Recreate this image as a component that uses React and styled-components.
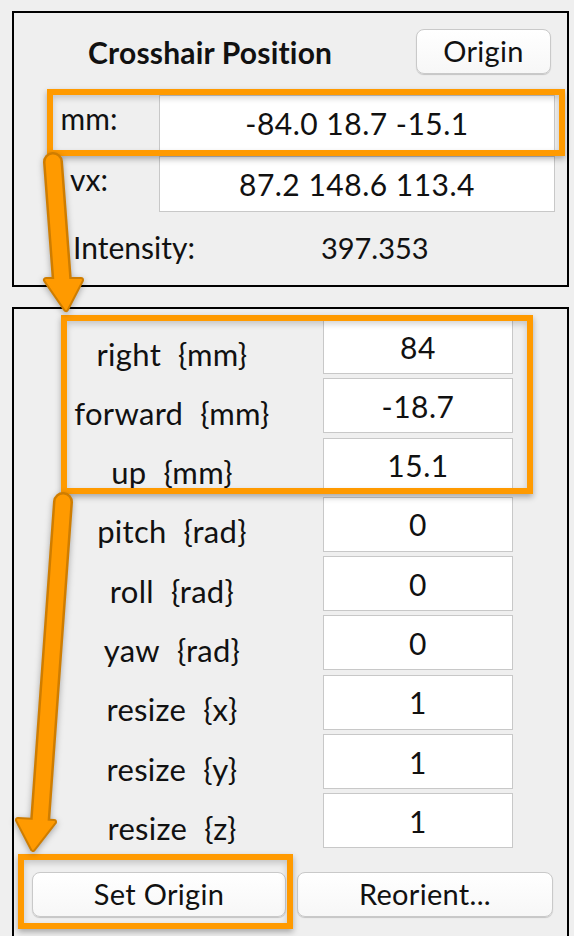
import React from 'react'
import styled, { createGlobalStyle } from 'styled-components'

const GlobalStyle = createGlobalStyle`
  html, body {
    margin: 0;
    padding: 0;
    background: #efefef;
    overflow: hidden;
  }
  body {
    font-family: Lato, "Open Sans", "Liberation Sans", sans-serif;
    color: #111;
  }
`;

const Page = styled.div`
  position: relative;
  width: 574px;
  height: 936px;
  padding: 11px 5px 0 12px;
  box-sizing: border-box;
  display: flex;
  flex-direction: column;
  gap: 20px;
`;

const Panel = styled.div`
  border: 2px solid #000;
  box-sizing: border-box;
  background: #efefef;
  height: ${p => p.$height}px;
  flex-shrink: 0;
`;

const Header = styled.div`
  display: flex;
  align-items: center;
  height: 45px;
  padding: 16px 16px 0 74px;
`;

const Title = styled.span`
  font-size: 30px;
  font-weight: 700;
  letter-spacing: 0.2px;
`;

const Button = styled.button`
  font-family: inherit;
  font-size: 29px;
  letter-spacing: 0.3px;
  color: #111;
  height: 45px;
  width: ${p => p.$width}px;
  margin-left: ${p => (p.$push ? 'auto' : '0')};
  background: linear-gradient(#ffffff, #f7f7f7);
  border: 1px solid #c9c9c9;
  border-radius: 8px;
  box-shadow: 0 1px 1px rgba(0, 0, 0, 0.18);
  padding: 0 0 2px;
`;

const CoordGrid = styled.div`
  display: grid;
  grid-template-columns: 145px 1fr;
  grid-auto-rows: 56px;
  row-gap: 5px;
  padding: 21px 12px 0 0;
`;

const CoordLabel = styled.div`
  font-size: 30px;
  text-align: center;
  padding: 5px 0 0 5px;
`;

const Field = styled.div`
  background: #fff;
  border: 1px solid #c8c8c8;
  display: flex;
  align-items: center;
  justify-content: center;
  font-size: 30px;
  letter-spacing: 0.5px;
`;

const IntensityRow = styled.div`
  display: flex;
  align-items: baseline;
  padding: 17px 0 0 59px;
  font-size: 30px;
`;

const IntensityValue = styled.span`
  margin-left: 126px;
  font-size: 29px;
`;

const ParamGrid = styled.div`
  display: grid;
  grid-template-columns: 309px 190px;
  grid-auto-rows: 55px;
  row-gap: 4.3px;
  padding-top: 10px;
`;

const ParamLabel = styled.div`
  display: flex;
  justify-content: center;
  align-items: center;
  gap: 17px;
  font-size: 31px;
  letter-spacing: 0.3px;
  padding: 14px 0 0 7px;
`;

const ButtonRow = styled.div`
  display: flex;
  gap: 11px;
  padding: 24px 14px 0 18px;
`;

const Overlay = styled.div`
  position: absolute;
  left: ${p => p.$x}px;
  top: ${p => p.$y}px;
  width: ${p => p.$w}px;
  height: ${p => p.$h}px;
  box-sizing: border-box;
  border: 6px solid #ff9a00;
  box-shadow: 0 3px 6px rgba(0, 0, 0, 0.3), inset 0 3px 6px rgba(0, 0, 0, 0.18);
  pointer-events: none;
`;

const Arrows = styled.svg`
  position: absolute;
  left: 0;
  top: 0;
  pointer-events: none;
  filter: drop-shadow(0 2px 3px rgba(0, 0, 0, 0.3));
`;

const params = [
  ['right', 'mm', '84'],
  ['forward', 'mm', '-18.7'],
  ['up', 'mm', '15.1'],
  ['pitch', 'rad', '0'],
  ['roll', 'rad', '0'],
  ['yaw', 'rad', '0'],
  ['resize', 'x', '1'],
  ['resize', 'y', '1'],
  ['resize', 'z', '1'],
]

function Arrow({ shaft, head }) {
  return (
    <g strokeLinejoin="round" strokeLinecap="round">
      <path d={shaft} stroke="#cf7d00" strokeWidth="20" fill="none" />
      <path d={head} stroke="#cf7d00" strokeWidth="6" fill="#cf7d00" />
      <path d={shaft} stroke="#ff9a00" strokeWidth="15" fill="none" />
      <path d={head} stroke="#ff9a00" strokeWidth="2" fill="#ff9a00" />
    </g>
  )
}

export default function App() {
  return (
    <>
      <GlobalStyle />
      <Page>
        <Panel $height={276}>
          <Header>
            <Title>Crosshair Position</Title>
            <Button $push $width={135}>Origin</Button>
          </Header>
          <CoordGrid>
            <CoordLabel>mm:</CoordLabel>
            <Field>-84.0 18.7 -15.1</Field>
            <CoordLabel>vx:</CoordLabel>
            <Field>87.2 148.6 113.4</Field>
          </CoordGrid>
          <IntensityRow>
            <span>Intensity:</span>
            <IntensityValue>397.353</IntensityValue>
          </IntensityRow>
        </Panel>
        <Panel $height={660}>
          <ParamGrid>
            {params.map(([name, unit, value], i) => (
              <React.Fragment key={i}>
                <ParamLabel>
                  <span>{name}</span>
                  <span>{`{${unit}}`}</span>
                </ParamLabel>
                <Field>{value}</Field>
              </React.Fragment>
            ))}
          </ParamGrid>
          <ButtonRow>
            <Button $width={254}>Set Origin</Button>
            <Button $width={256}>Reorient...</Button>
          </ButtonRow>
        </Panel>

        <Overlay $x={47} $y={89} $w={518} $h={67} />
        <Overlay $x={61} $y={315} $w={472} $h={179} />
        <Overlay $x={18} $y={854} $w={275} $h={75} />

        <Arrows width="574" height="936" viewBox="0 0 574 936">
          <Arrow shaft="M53 162 L62 282" head="M46 280 L81 280 L66 309 Z" />
          <Arrow shaft="M63 502 L40 822" head="M18 820 L54 822 L33 849 Z" />
        </Arrows>
      </Page>
    </>
  )
}
